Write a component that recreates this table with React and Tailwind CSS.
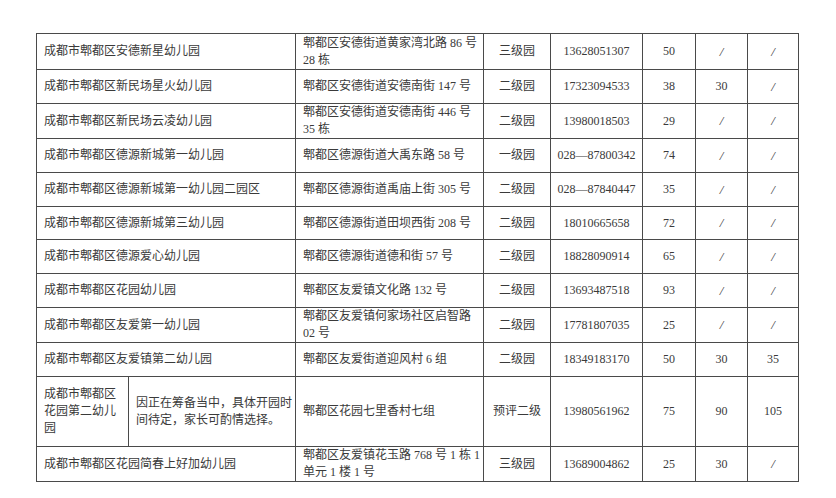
const rows = [
  { name: "成都市郫都区安德新星幼儿园", addr: ["郫都区安德街道黄家湾北路 86 号", "28 栋"], level: "三级园", tel: "13628051307", a: "50", b: "/", c: "/", h: "h-[36px]" },
  { name: "成都市郫都区新民场星火幼儿园", addr: ["郫都区安德街道安德南街 147 号"], level: "二级园", tel: "17323094533", a: "38", b: "30", c: "/", h: "h-[34px]" },
  { name: "成都市郫都区新民场云凌幼儿园", addr: ["郫都区安德街道安德南街 446 号", "35 栋"], level: "二级园", tel: "13980018503", a: "29", b: "/", c: "/", h: "h-[35px]" },
  { name: "成都市郫都区德源新城第一幼儿园", addr: ["郫都区德源街道大禹东路 58 号"], level: "一级园", tel: "028—87800342", a: "74", b: "/", c: "/", h: "h-[34px]" },
  { name: "成都市郫都区德源新城第一幼儿园二园区", addr: ["郫都区德源街道禹庙上街 305 号"], level: "二级园", tel: "028—87840447", a: "35", b: "/", c: "/", h: "h-[34px]" },
  { name: "成都市郫都区德源新城第三幼儿园", addr: ["郫都区德源街道田坝西街 208 号"], level: "二级园", tel: "18010665658", a: "72", b: "/", c: "/", h: "h-[33px]" },
  { name: "成都市郫都区德源爱心幼儿园", addr: ["郫都区德源街道德和街 57 号"], level: "二级园", tel: "18828090914", a: "65", b: "/", c: "/", h: "h-[34px]" },
  { name: "成都市郫都区花园幼儿园", addr: ["郫都区友爱镇文化路 132 号"], level: "二级园", tel: "13693487518", a: "93", b: "/", c: "/", h: "h-[34px]" },
  { name: "成都市郫都区友爱第一幼儿园", addr: ["郫都区友爱镇何家场社区启智路", "02 号"], level: "二级园", tel: "17781807035", a: "25", b: "/", c: "/", h: "h-[35px]" },
  { name: "成都市郫都区友爱镇第二幼儿园", addr: ["郫都区友爱街道迎风村 6 组"], level: "二级园", tel: "18349183170", a: "50", b: "30", c: "35", h: "h-[34px]" },
];

const last = { name: "成都市郫都区花园简春上好加幼儿园", addr: ["郫都区友爱镇花玉路 768 号 1 栋 1", "单元 1 楼 1 号"], level: "三级园", tel: "13689004862", a: "25", b: "30", c: "/", h: "h-[35px]" };

const td = "border border-[#4a4a4a] p-0 align-middle";

function Addr({ lines }) {
  return (
    <td className={`${td} pl-[7px] pr-1 text-left leading-[17px]`}>
      {lines.map((l, i) => (
        <div key={i} className="whitespace-nowrap">{l}</div>
      ))}
    </td>
  );
}

// "/" in the source is drawn as a thin slanted stroke
function Val({ v }) {
  return (
    <td className={`${td} text-center`}>
      {v === "/" ? <span className="italic text-[13px]">/</span> : v}
    </td>
  );
}

function Cells({ r }) {
  return (
    <>
      <Addr lines={r.addr} />
      <td className={`${td} text-center`}>{r.level}</td>
      <td className={`${td} text-center`}>{r.tel}</td>
      <Val v={r.a} />
      <Val v={r.b} />
      <Val v={r.c} />
    </>
  );
}

export default function App() {
  return (
    <div
      className="w-[836px] h-[498px] bg-white pt-[33px] pl-[36px] text-[12px] leading-[17px] text-[#3a3a3a]"
      style={{ fontFamily: '"Liberation Serif", "Noto Sans CJK SC", serif' }}
    >
      <table className="table-fixed border-collapse w-[762px]">
        <colgroup>
          <col className="w-[92px]" />
          <col className="w-[167px]" />
          <col className="w-[188px]" />
          <col className="w-[67px]" />
          <col className="w-[92px]" />
          <col className="w-[53px]" />
          <col className="w-[52px]" />
          <col className="w-[51px]" />
        </colgroup>
        <tbody>
          {rows.map((r) => (
            <tr key={r.name} className={r.h}>
              <td colSpan={2} className={`${td} pl-[7px] whitespace-nowrap`}>{r.name}</td>
              <Cells r={r} />
            </tr>
          ))}
          <tr className="h-[70px]">
            <td className={`${td} pl-[7px] leading-[17px]`}>
              <div>成都市郫都区</div>
              <div>花园第二幼儿</div>
              <div>园</div>
            </td>
            <td className={`${td} pl-[7px] leading-[17px]`}>
              <div className="whitespace-nowrap">因正在筹备当中，具体开园时</div>
              <div className="whitespace-nowrap">间待定，家长可酌情选择。</div>
            </td>
            <Addr lines={["郫都区花园七里香村七组"]} />
            <td className={`${td} text-center`}>预评二级</td>
            <td className={`${td} text-center`}>13980561962</td>
            <Val v="75" />
            <Val v="90" />
            <Val v="105" />
          </tr>
          <tr className={last.h}>
            <td colSpan={2} className={`${td} pl-[7px] whitespace-nowrap`}>{last.name}</td>
            <Cells r={last} />
          </tr>
        </tbody>
      </table>
    </div>
  );
}
